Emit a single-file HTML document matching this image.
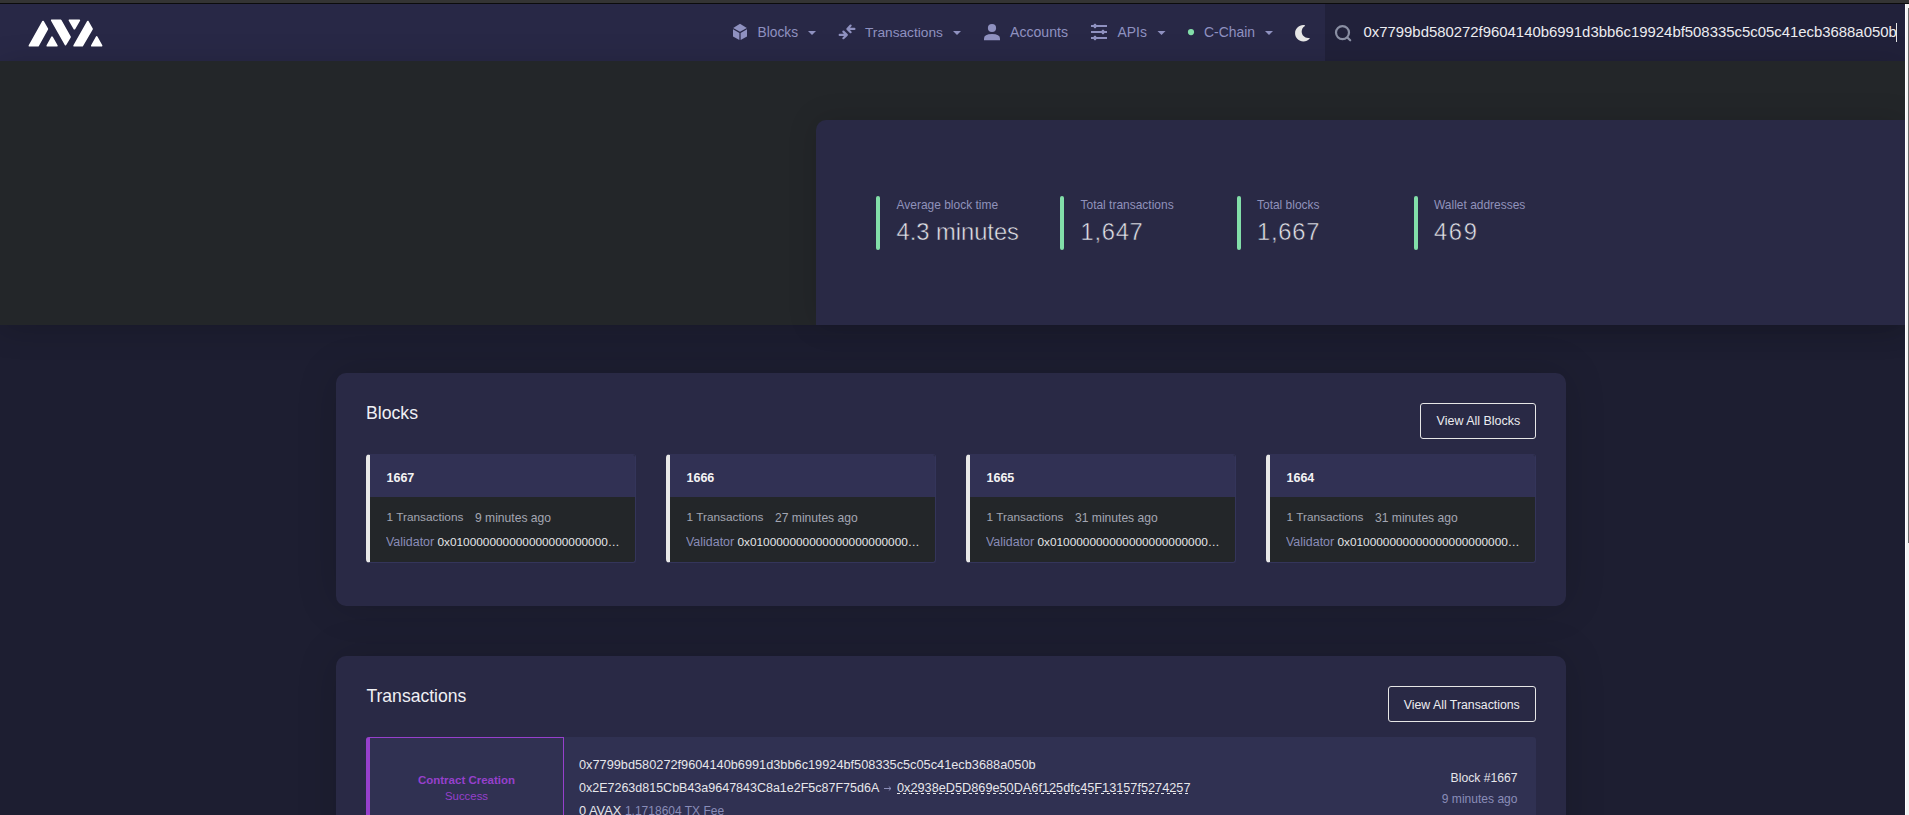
<!DOCTYPE html>
<html><head><meta charset="utf-8"><style>
*{box-sizing:border-box;margin:0;padding:0}
html,body{width:1909px;height:815px;overflow:hidden;background:#1d1e31;font-family:"Liberation Sans",sans-serif;}
.abs{position:absolute}
.t{position:absolute;white-space:nowrap}
svg{position:absolute;left:0;top:0;overflow:visible}
</style></head><body>

<div class="abs" style="left:0;top:0;width:1909px;height:3px;background:#343434"></div>
<div class="abs" style="left:0;top:3px;width:1909px;height:1px;background:#0c0c0c"></div>
<div class="abs" style="left:0;top:4px;width:1905px;height:57px;background:#282846"></div>
<div class="abs" style="left:1325px;top:4px;width:580px;height:57px;background:#21213a"></div>
<div class="abs" style="left:0;top:61px;width:1905px;height:264px;background:#232629;box-shadow:0 4px 30px rgba(0,0,0,0.18)"></div>
<div class="abs" style="left:816px;top:120px;width:1089px;height:205px;background:#292945;border-top-left-radius:10px;box-shadow:0 0 30px rgba(0,0,0,0.14)"></div>
<div class="abs" style="left:1905px;top:4px;width:4px;height:811px;background:#f3f3f3;border-left:1px solid #fff"></div>
<div class="abs" style="left:1908px;top:8px;width:1px;height:535px;background:#6e6e6e"></div>
<div class="abs" style="left:336px;top:373px;width:1230px;height:233px;background:#292945;border-radius:10px;box-shadow:0 0 40px rgba(0,0,0,0.16)"></div>
<div class="abs" style="left:336px;top:656px;width:1230px;height:200px;background:#292945;border-radius:10px;box-shadow:0 0 40px rgba(0,0,0,0.16)"></div>
<svg width="1909" height="815" viewBox="0 0 1909 815">
<g fill="#fff" stroke="#fff" stroke-width="1.7" stroke-linejoin="round">
<path d="M29.45,45.75 L43.01,21.52 L47.32,29.01 L38.00,45.75 Z"/>
<path d="M47.33,45.75 L52.01,37.16 L56.85,45.75 Z"/>
<path d="M51.76,20.35 L60.70,20.35 L70.02,36.99 L65.51,44.69 Z"/>
<path d="M69.48,20.35 L79.32,20.35 L74.40,28.72 Z"/>
<path d="M74.16,45.75 L87.89,21.54 L92.02,28.99 L82.21,45.75 Z"/>
<path d="M91.84,45.75 L96.70,36.96 L101.56,45.75 Z"/>
</g>
<g fill="#8f91c0">
<path d="M733.2,27.9 L740,23.8 L746.8,27.9 L740,31.7 Z"/>
<path d="M733,29.3 L739.4,32.9 L739.4,40 L733,36.6 Z"/>
<path d="M740.6,32.9 L747,29.3 L747,36.6 L740.6,40 Z"/>
<path d="M808,31 L816,31 L812,35 Z"/>
<path d="M953,31 L961,31 L957,35 Z"/>
<path d="M1157.5,31 L1165.5,31 L1161.5,35 Z"/>
<path d="M1265,31 L1273,31 L1269,35 Z"/>
<circle cx="992" cy="28" r="4.1"/>
<path d="M984,40.2 L984,38.6 Q984,34 992,34 Q1000,34 1000,38.6 L1000,40.2 Z"/>
<rect x="1091" y="25" width="16" height="2"/>
<rect x="1091" y="31" width="16" height="2"/>
<rect x="1091" y="37" width="16" height="2"/>
<rect x="1093.8" y="23.8" width="2.4" height="4.4" rx="0.8"/>
<rect x="1101.8" y="29.8" width="2.4" height="4.4" rx="0.8"/>
<rect x="1093.8" y="35.8" width="2.4" height="4.4" rx="0.8"/>
</g>
<g fill="none" stroke="#8f91c0" stroke-width="2.2" stroke-linecap="round" stroke-linejoin="round">
<path d="M847.6,28.9 L854.4,28.9 M850.6,25.6 L847.4,28.9 L850.6,32.2"/>
<path d="M839.7,34.9 L846.6,34.9 M843.4,31.6 L846.8,34.9 L843.4,38.2"/>
</g>
<circle cx="1191" cy="32.1" r="3.1" fill="#82dea9"/>
<path transform="translate(1294.2,25.1) scale(0.0322)" fill="#e6e6e6" d="M283.211 512c78.962 0 151.079-35.925 198.857-94.792 7.068-8.708-.639-21.43-11.562-19.35-124.203 23.654-238.262-71.576-238.262-196.954 0-72.222 38.662-138.635 101.498-174.394 9.686-5.512 7.25-20.197-3.756-22.23A258.156 258.156 0 0 0 283.211 0c-141.309 0-256 114.511-256 256 0 141.309 114.511 256 256 256z"/>
<g fill="none" stroke="#8a8fa3" stroke-width="2.2" stroke-linecap="round">
<circle cx="1342.5" cy="32.6" r="6.5"/>
<path d="M1347.6,37.7 L1350.2,40.3"/>
</g>
<rect x="1896" y="23" width="1" height="19" fill="#e6e6e6"/>
</svg>
<div class="t" style="left:757.6px;top:26.21px;font-size:13.75px;line-height:13.75px;color:#8f91c0;font-weight:400;">Blocks</div>
<div class="t" style="left:865px;top:26.05px;font-size:13.7px;line-height:13.7px;color:#8f91c0;font-weight:400;">Transactions</div>
<div class="t" style="left:1010px;top:25.01px;font-size:14.1px;line-height:14.1px;color:#8f91c0;font-weight:400;">Accounts</div>
<div class="t" style="left:1117.5px;top:25.89px;font-size:13.9px;line-height:13.9px;color:#8f91c0;font-weight:400;">APIs</div>
<div class="t" style="left:1204px;top:25.89px;font-size:13.9px;line-height:13.9px;color:#8f91c0;font-weight:400;">C-Chain</div>
<div class="t" style="left:1363.5px;top:25.33px;font-size:14.9px;line-height:14.9px;color:#ececf0;font-weight:400;">0x7799bd580272f9604140b6991d3bb6c19924bf508335c5c05c41ecb3688a050b</div>
<div class="abs" style="left:876px;top:196px;width:4.4px;height:54px;border-radius:2.2px;background:#82dea9"></div>
<div class="t" style="left:896.5px;top:200.13px;font-size:11.97px;line-height:11.97px;color:#9092bb;font-weight:400;">Average block time</div>
<div class="t" style="left:896.5px;top:221.15px;font-size:23.7px;line-height:23.7px;color:#e4e4ea;font-weight:400;-webkit-text-stroke:0.5px #292945;letter-spacing:0px;">4.3 minutes</div>
<div class="abs" style="left:1060px;top:196px;width:4.4px;height:54px;border-radius:2.2px;background:#82dea9"></div>
<div class="t" style="left:1080.5px;top:200.13px;font-size:11.97px;line-height:11.97px;color:#9092bb;font-weight:400;">Total transactions</div>
<div class="t" style="left:1080.5px;top:221.15px;font-size:23.7px;line-height:23.7px;color:#e4e4ea;font-weight:400;-webkit-text-stroke:0.5px #292945;letter-spacing:0.75px;">1,647</div>
<div class="abs" style="left:1236.5px;top:196px;width:4.4px;height:54px;border-radius:2.2px;background:#82dea9"></div>
<div class="t" style="left:1257.0px;top:200.13px;font-size:11.97px;line-height:11.97px;color:#9092bb;font-weight:400;">Total blocks</div>
<div class="t" style="left:1257.0px;top:221.15px;font-size:23.7px;line-height:23.7px;color:#e4e4ea;font-weight:400;-webkit-text-stroke:0.5px #292945;letter-spacing:0.8px;">1,667</div>
<div class="abs" style="left:1413.5px;top:196px;width:4.4px;height:54px;border-radius:2.2px;background:#82dea9"></div>
<div class="t" style="left:1434.0px;top:200.13px;font-size:11.97px;line-height:11.97px;color:#9092bb;font-weight:400;">Wallet addresses</div>
<div class="t" style="left:1434.0px;top:221.15px;font-size:23.7px;line-height:23.7px;color:#e4e4ea;font-weight:400;-webkit-text-stroke:0.5px #292945;letter-spacing:1.7px;">469</div>
<div class="t" style="left:366px;top:404.69px;font-size:17.66px;line-height:17.66px;color:#f0f0f4;font-weight:400;">Blocks</div>
<div class="abs" style="left:1420px;top:403px;width:116px;height:36px;border:1px solid #e6e6e6;border-radius:3px"></div>
<div class="t" style="left:1436.6px;top:415.19px;font-size:12.48px;line-height:12.48px;color:#ececf0;font-weight:400;">View All Blocks</div>
<div class="abs" style="left:366px;top:454px;width:270px;height:109px;border-radius:4px 3px 3px 4px;background:#232629;border:1px solid #34355a;border-top-color:#313154;border-left:4px solid #e8e8e8;overflow:hidden"><div style="height:42px;background:#313154"></div></div>
<div class="t" style="left:386.5px;top:471.77px;font-size:12.5px;line-height:12.5px;color:#f4f4f4;font-weight:700;">1667</div>
<div class="t" style="left:386.5px;top:512.04px;font-size:11.84px;line-height:11.84px;color:#a3a6b3;font-weight:400;">1 Transactions</div>
<div class="t" style="left:475px;top:511.81px;font-size:12.1px;line-height:12.1px;color:#a3a6b3;font-weight:400;">9 minutes ago</div>
<div class="t" style="left:386px;top:537.44px;font-size:11.84px;line-height:11.84px;color:#e6e6ea;font-weight:400;width:234px;overflow:hidden;text-overflow:ellipsis;"><span style="color:#8a8db8;font-size:12.45px">Validator</span> 0x010000000000000000000000000000000000000000</div>
<div class="abs" style="left:666px;top:454px;width:270px;height:109px;border-radius:4px 3px 3px 4px;background:#232629;border:1px solid #34355a;border-top-color:#313154;border-left:4px solid #e8e8e8;overflow:hidden"><div style="height:42px;background:#313154"></div></div>
<div class="t" style="left:686.5px;top:471.77px;font-size:12.5px;line-height:12.5px;color:#f4f4f4;font-weight:700;">1666</div>
<div class="t" style="left:686.5px;top:512.04px;font-size:11.84px;line-height:11.84px;color:#a3a6b3;font-weight:400;">1 Transactions</div>
<div class="t" style="left:775px;top:511.81px;font-size:12.1px;line-height:12.1px;color:#a3a6b3;font-weight:400;">27 minutes ago</div>
<div class="t" style="left:686px;top:537.44px;font-size:11.84px;line-height:11.84px;color:#e6e6ea;font-weight:400;width:234px;overflow:hidden;text-overflow:ellipsis;"><span style="color:#8a8db8;font-size:12.45px">Validator</span> 0x010000000000000000000000000000000000000000</div>
<div class="abs" style="left:966px;top:454px;width:270px;height:109px;border-radius:4px 3px 3px 4px;background:#232629;border:1px solid #34355a;border-top-color:#313154;border-left:4px solid #e8e8e8;overflow:hidden"><div style="height:42px;background:#313154"></div></div>
<div class="t" style="left:986.5px;top:471.77px;font-size:12.5px;line-height:12.5px;color:#f4f4f4;font-weight:700;">1665</div>
<div class="t" style="left:986.5px;top:512.04px;font-size:11.84px;line-height:11.84px;color:#a3a6b3;font-weight:400;">1 Transactions</div>
<div class="t" style="left:1075px;top:511.81px;font-size:12.1px;line-height:12.1px;color:#a3a6b3;font-weight:400;">31 minutes ago</div>
<div class="t" style="left:986px;top:537.44px;font-size:11.84px;line-height:11.84px;color:#e6e6ea;font-weight:400;width:234px;overflow:hidden;text-overflow:ellipsis;"><span style="color:#8a8db8;font-size:12.45px">Validator</span> 0x010000000000000000000000000000000000000000</div>
<div class="abs" style="left:1266px;top:454px;width:270px;height:109px;border-radius:4px 3px 3px 4px;background:#232629;border:1px solid #34355a;border-top-color:#313154;border-left:4px solid #e8e8e8;overflow:hidden"><div style="height:42px;background:#313154"></div></div>
<div class="t" style="left:1286.5px;top:471.77px;font-size:12.5px;line-height:12.5px;color:#f4f4f4;font-weight:700;">1664</div>
<div class="t" style="left:1286.5px;top:512.04px;font-size:11.84px;line-height:11.84px;color:#a3a6b3;font-weight:400;">1 Transactions</div>
<div class="t" style="left:1375px;top:511.81px;font-size:12.1px;line-height:12.1px;color:#a3a6b3;font-weight:400;">31 minutes ago</div>
<div class="t" style="left:1286px;top:537.44px;font-size:11.84px;line-height:11.84px;color:#e6e6ea;font-weight:400;width:234px;overflow:hidden;text-overflow:ellipsis;"><span style="color:#8a8db8;font-size:12.45px">Validator</span> 0x010000000000000000000000000000000000000000</div>
<div class="t" style="left:366.4px;top:688.46px;font-size:17.58px;line-height:17.58px;color:#f0f0f4;font-weight:400;">Transactions</div>
<div class="abs" style="left:1388px;top:686px;width:148px;height:36px;border:1px solid #e6e6e6;border-radius:3px"></div>
<div class="t" style="left:1403.8px;top:698.54px;font-size:12.3px;line-height:12.3px;color:#ececf0;font-weight:400;">View All Transactions</div>
<div class="abs" style="left:366px;top:737px;width:1170px;height:120px;border-radius:3px;background:#303152"></div>
<div class="abs" style="left:366px;top:737px;width:198px;height:120px;border-top-left-radius:3px;border:1px solid #9640cc;border-left:4px solid #9640cc;border-bottom:0"></div>
<div class="t" style="left:316.5px;width:300px;text-align:center;top:774.93px;font-size:11.5px;line-height:11.5px;color:#9640cc;font-weight:700;">Contract Creation</div>
<div class="t" style="left:316.5px;width:300px;text-align:center;top:791.01px;font-size:11.4px;line-height:11.4px;color:#9640cc;font-weight:400;">Success</div>
<div class="t" style="left:579px;top:759.46px;font-size:12.75px;line-height:12.75px;color:#e6e6ea;font-weight:400;">0x7799bd580272f9604140b6991d3bb6c19924bf508335c5c05c41ecb3688a050b</div>
<div class="t" style="left:579px;top:782.28px;font-size:12.5px;line-height:12.5px;color:#e6e6ea;font-weight:400;">0x2E7263d815CbB43a9647843C8a1e2F5c87F75d6A</div>
<div class="t" style="left:897px;top:782.09px;font-size:12.72px;line-height:12.72px;color:#e6e6ea;font-weight:400;">0x2938eD5D869e50DA6f125dfc45F13157f5274257</div>
<svg width="1909" height="815"><path d="M884,788.5 L891,788.5 M888.8,786.5 L891,788.5 L888.8,790.5" stroke="#8a8db8" stroke-width="1" fill="none"/><line x1="897" y1="793.5" x2="1191" y2="793.5" stroke="#e6e6ea" stroke-width="1" stroke-dasharray="3,3"/></svg>
<div class="t" style="left:579px;top:804.58px;font-size:12.85px;line-height:12.85px;color:#e6e6ea;font-weight:400;">0 AVAX <span style="color:#8a8db8;font-size:12px">1.1718604 TX Fee</span></div>
<div class="t" style="right:391.5px;top:771.56px;font-size:12.17px;line-height:12.17px;color:#e6e6ea;font-weight:400;">Block #1667</div>
<div class="t" style="right:391.5px;top:793.46px;font-size:12.05px;line-height:12.05px;color:#8a8db8;font-weight:400;">9 minutes ago</div>
</body></html>
